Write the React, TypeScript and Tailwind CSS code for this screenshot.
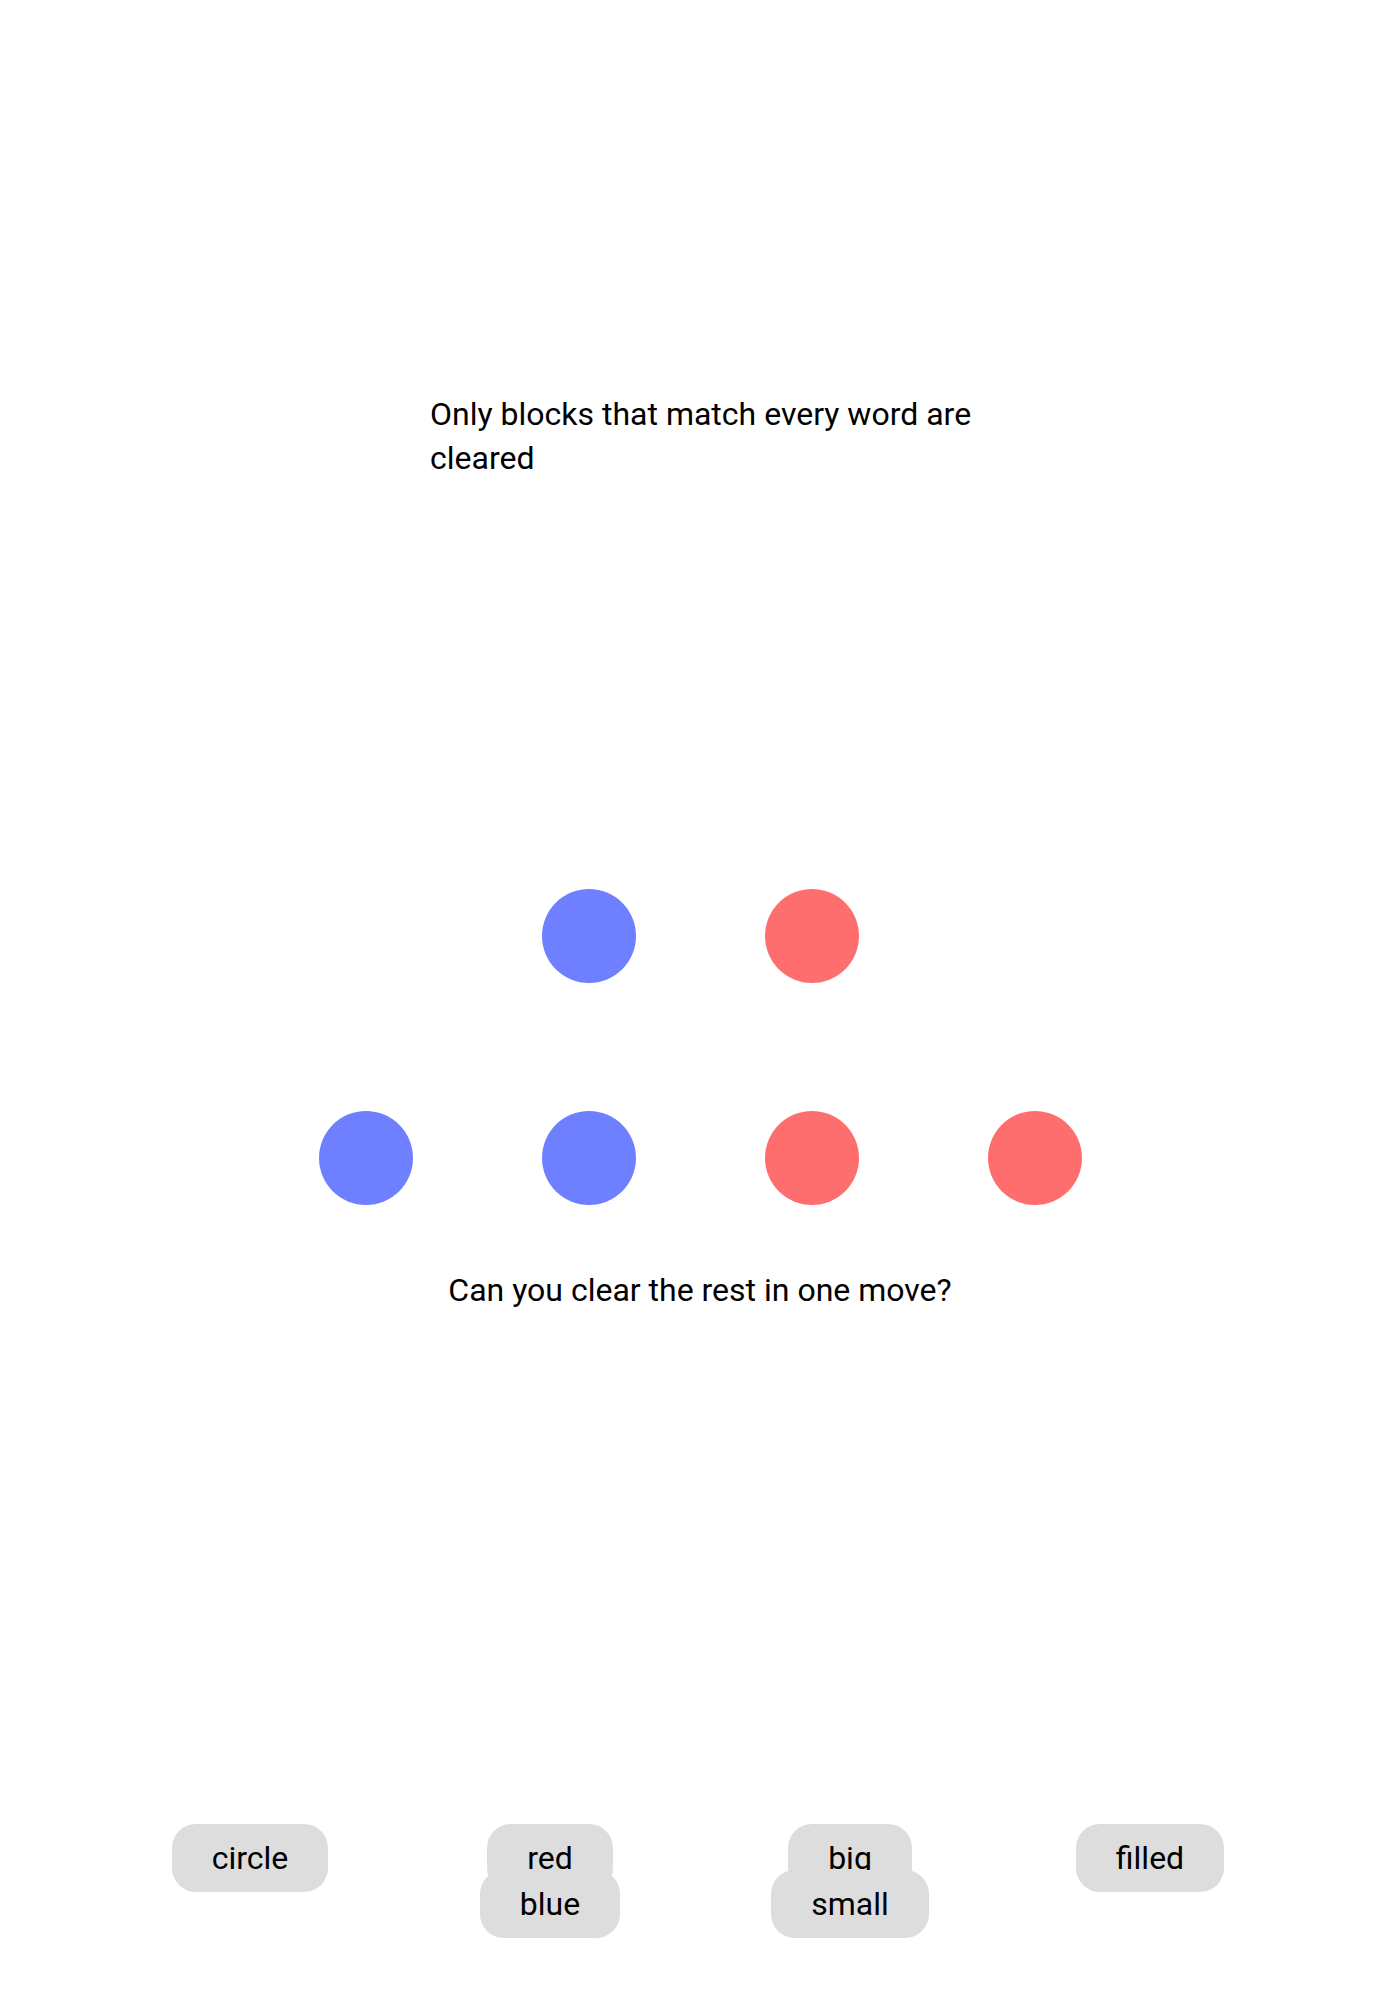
const cells: (null | "blue" | "red")[] = [
  null, "blue", "red", null,
  "blue", "blue", "red", "red",
];

const columns = [["circle"], ["red", "blue"], ["big", "small"], ["filled"]];

const Word = ({ label }: { label: string }) => (
  <span className="bg-[#dddddd] rounded-[24px] px-[40px] py-[15px] cursor-pointer">
    {label}
  </span>
);

export default function App() {
  return (
    <div className="min-h-screen w-full bg-white text-black font-['Roboto',sans-serif] text-[32px] leading-[1.4]">
      <div className="pt-[393px] mx-auto w-[546px] pl-[3px] leading-[43.5px]">
        <p>Only blocks that match every word are cleared</p>
      </div>

      <div className="mt-[345px] mx-auto w-[892px] grid grid-cols-4">
        {cells.map((c, i) => (
          <div key={i} className="h-[222px] flex items-center justify-center">
            {c && (
              <div
                className={
                  c === "blue"
                    ? "w-[94px] h-[94px] rounded-full bg-[#6e80ff]"
                    : "w-[94px] h-[94px] rounded-full bg-[#ff6e6e]"
                }
              />
            )}
          </div>
        ))}
      </div>

      <p className="-mt-[1px] text-center">Can you clear the rest in one move?</p>

      <div className="mt-[522px] mx-auto w-[1200px] grid grid-cols-4 text-center leading-[46px]">
        {columns.map((words, i) => (
          <div key={i}>
            {words.map((w, j) => (
              <span key={w}>
                {j > 0 && <br />}
                <Word label={w} />
              </span>
            ))}
          </div>
        ))}
      </div>
    </div>
  );
}
